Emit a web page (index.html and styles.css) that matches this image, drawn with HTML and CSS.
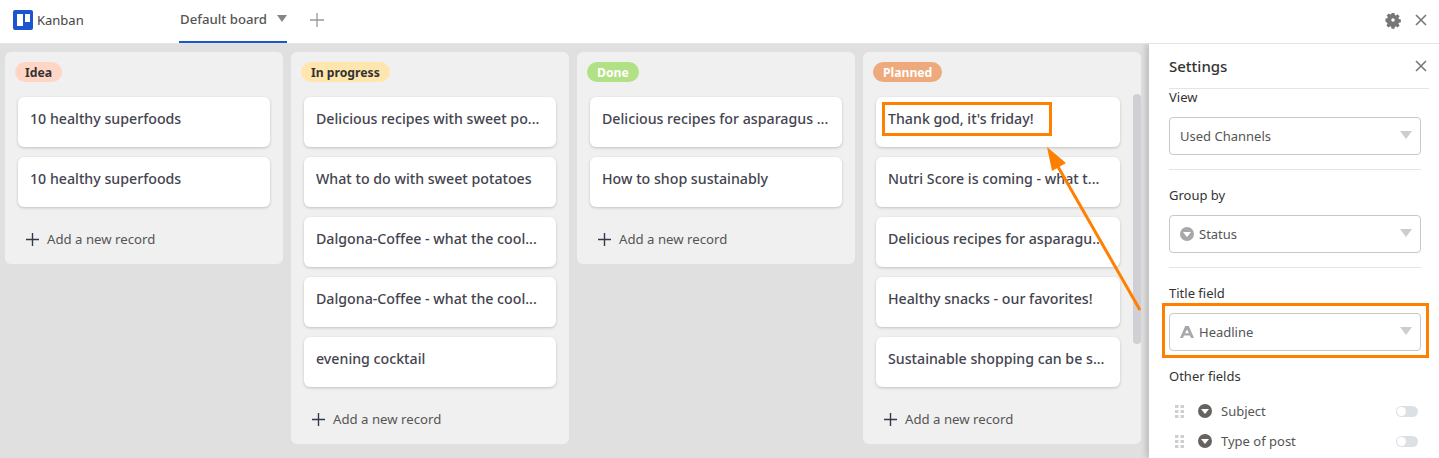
FILE: index.html
```html
<!DOCTYPE html>
<html lang="en">

<head>
    <meta charset="UTF-8">
    <title>Kanban</title>
    <link rel="stylesheet" href="styles.css">
</head>

<body>
    <!-- Top bar -->
    <header class="topbar">
        <div class="brand">
            <svg class="brand-logo" viewBox="0 0 20 20">
                <rect width="20" height="20" rx="2" fill="#1b56cc" />
                <rect x="4" y="4" width="6" height="12" fill="#fff" />
                <rect x="12" y="4" width="5" height="8" fill="#fff" />
            </svg>
            <span>Kanban</span>
        </div>
        <div class="tab">
            <span>Default board</span>
            <svg class="tab-caret" viewBox="0 0 10 7"><path d="M0 0h10L5 7z" /></svg>
        </div>
        <svg class="add-tab" viewBox="0 0 14 14"><path d="M7 0v14M0 7h14" /></svg>
        <div class="top-actions">
            <svg class="gear" viewBox="0 0 24 24">
                <path fill-rule="evenodd" d="M9.500 0h5l.7 3.400 1.700.7 2.900-1.900 3.500 3.500-1.900 2.900.7 1.700 3.400.7v5l-3.400.7-.7 1.700 1.900 2.900-3.500 3.500-2.900-1.900-1.700.7-.7 3.400h-5l-.7-3.400-1.700-.7-2.900 1.900-3.500-3.500 1.900-2.900-.7-1.700L-1 14.500v-5l3.400-.7.7-1.700-1.900-2.900 3.500-3.500 2.900 1.900 1.700-.7zM12 9a3 3 0 1 0 0 6 3 3 0 0 0 0-6z" />
            </svg>
            <svg class="close" viewBox="0 0 12 12"><path d="M1 1l10 10M11 1L1 11" /></svg>
        </div>
    </header>

    <div class="main">
        <!-- Board -->
        <div class="board">
            <section class="column">
                <span class="badge badge-idea">Idea</span>
                <div class="card">10 healthy superfoods</div>
                <div class="card">10 healthy superfoods</div>
                <div class="add-record"><svg viewBox="0 0 14 14"><path d="M7 0v14M0 7h14" /></svg>Add a new record</div>
            </section>
            <section class="column">
                <span class="badge badge-progress">In progress</span>
                <div class="card">Delicious recipes with sweet po...</div>
                <div class="card">What to do with sweet potatoes</div>
                <div class="card">Dalgona-Coffee - what the cool...</div>
                <div class="card">Dalgona-Coffee - what the cool...</div>
                <div class="card">evening cocktail</div>
                <div class="add-record"><svg viewBox="0 0 14 14"><path d="M7 0v14M0 7h14" /></svg>Add a new record</div>
            </section>
            <section class="column">
                <span class="badge badge-done">Done</span>
                <div class="card">Delicious recipes for asparagus ...</div>
                <div class="card">How to shop sustainably</div>
                <div class="add-record"><svg viewBox="0 0 14 14"><path d="M7 0v14M0 7h14" /></svg>Add a new record</div>
            </section>
            <section class="column column-scroll">
                <span class="badge badge-planned">Planned</span>
                <div class="card">Thank god, it's friday!</div>
                <div class="card">Nutri Score is coming - what t...</div>
                <div class="card">Delicious recipes for asparagu...</div>
                <div class="card">Healthy snacks - our favorites!</div>
                <div class="card">Sustainable shopping can be s...</div>
                <div class="add-record"><svg viewBox="0 0 14 14"><path d="M7 0v14M0 7h14" /></svg>Add a new record</div>
                <div class="scroll-thumb"></div>
            </section>
        </div>

        <!-- Settings panel -->
        <aside class="settings">
            <div class="settings-head">
                <span>Settings</span>
                <svg class="close" viewBox="0 0 12 12"><path d="M1 1l10 10M11 1L1 11" /></svg>
            </div>
            <div class="field field-first">
                <label>View</label>
                <div class="select">
                    <span>Used Channels</span>
                    <svg class="select-caret" viewBox="0 0 12 8"><path d="M0 0h12L6 8z" /></svg>
                </div>
            </div>
            <div class="field">
                <label>Group by</label>
                <div class="select">
                    <svg class="option-icon" viewBox="0 0 14 14"><circle cx="7" cy="7" r="7" fill="#a8a8a8" /><path d="M3 5h8L7 10z" fill="#fff" /></svg>
                    <span>Status</span>
                    <svg class="select-caret" viewBox="0 0 12 8"><path d="M0 0h12L6 8z" /></svg>
                </div>
            </div>
            <div class="field field-last">
                <label>Title field</label>
                <div class="select">
                    <svg class="option-icon" viewBox="0 0 14 14"><path d="M5.200 1h3.600L14 13h-3l-1-2.600H4L3 13H0zM7 4.400 5 8.200h4z" fill="#a8a8a8" fill-rule="evenodd" /></svg>
                    <span>Headline</span>
                    <svg class="select-caret" viewBox="0 0 12 8"><path d="M0 0h12L6 8z" /></svg>
                </div>
            </div>
            <div class="other-title">Other fields</div>
            <div class="other-row">
                <svg class="drag" viewBox="0 0 9 13"><path d="M0 0h3.500v3H0zM5.500 0H9v3H5.500zM0 5h3.500v3H0zM5.500 5H9v3H5.500zM0 10h3.500v3H0zM5.500 10H9v3H5.500z" /></svg>
                <svg class="other-icon" viewBox="0 0 14 14"><circle cx="7" cy="7" r="7" fill="#66625f" /><path d="M3 5h8L7 10z" fill="#fff" /></svg>
                <span>Subject</span>
                <span class="toggle"></span>
            </div>
            <div class="other-row">
                <svg class="drag" viewBox="0 0 9 13"><path d="M0 0h3.500v3H0zM5.500 0H9v3H5.500zM0 5h3.500v3H0zM5.500 5H9v3H5.500zM0 10h3.500v3H0zM5.500 10H9v3H5.500z" /></svg>
                <svg class="other-icon" viewBox="0 0 14 14"><circle cx="7" cy="7" r="7" fill="#66625f" /><path d="M3 5h8L7 10z" fill="#fff" /></svg>
                <span>Type of post</span>
                <span class="toggle"></span>
            </div>
        </aside>
    </div>

    <!-- Annotations drawn on top of the screenshot -->
    <div class="mark mark-card"></div>
    <div class="mark mark-field"></div>
    <svg class="arrow" viewBox="0 0 1439 458">
        <path d="M1140 310 1057 165" />
        <path class="arrow-head" d="M1047 147 1066 163 1052 171z" />
    </svg>
</body>

</html>
```

FILE: styles.css
```css
* {
    box-sizing: border-box;
}

body {
    margin: 0;
    height: 458px;
    overflow: hidden;
    position: relative;
    font-family: "Noto Sans", "Open Sans", sans-serif;
    color: #333;
    background: #fff;
    display: flex;
    flex-direction: column;
}

/* Top bar */
.topbar {
    height: 44px;
    flex: none;
    display: flex;
    align-items: flex-start;
    background: #fff;
    border-bottom: 1px solid #e4e4e4;
    padding-left: 13px;
}

.brand {
    width: 166px;
    height: 40px;
    display: flex;
    align-items: center;
    gap: 4px;
    font-size: 13px;
    color: #444;
}

.brand-logo {
    width: 20px;
    height: 20px;
}

.tab {
    width: 108px;
    height: 43px;
    padding: 0 0 3px 1px;
    display: flex;
    align-items: center;
    justify-content: space-between;
    border-bottom: 2px solid #1b56cc;
    font-size: 13.2px;
    font-weight: 500;
    color: #555;
}

.tab-caret {
    width: 10px;
    height: 7px;
    margin-top: -2px;
    fill: #8a8487;
}

.add-tab {
    width: 14px;
    height: 14px;
    margin: 13px 0 0 23px;
    fill: none;
    stroke: #999;
    stroke-width: 1.3;
}

.top-actions {
    margin-left: auto;
    padding: 13px 12px 0 0;
    display: flex;
    align-items: center;
    gap: 15px;
}

.gear {
    width: 14px;
    height: 14px;
    overflow: visible;
    fill: #777;
}

.close {
    width: 12px;
    height: 12px;
    fill: none;
    stroke: #777;
    stroke-width: 1.6;
}

.main {
    flex: 1;
    display: flex;
    min-height: 0;
}

/* Board */
.board {
    flex: 1;
    display: flex;
    align-items: flex-start;
    gap: 8px;
    padding: 8px 0 0 5px;
    background: #e0e0e0;
}

.column {
    position: relative;
    width: 278px;
    padding: 10px 13px 0;
    background: #f0f0f0;
    border-radius: 6px;
}

.badge {
    display: inline-block;
    height: 20px;
    margin-left: -3px;
    margin-bottom: 15px;
    padding: 0 10px;
    border-radius: 10px;
    font-size: 12.2px;
    font-weight: 700;
    line-height: 21px;
    vertical-align: top;
}

.badge-idea {
    background: #ffd5c5;
}

.badge-progress {
    background: #ffe5ae;
}

.badge-done {
    background: #b2e085;
    color: #fff;
}

.badge-planned {
    background: #eeaa7c;
    color: #fff;
}

.card {
    width: 252px;
    height: 50px;
    margin-bottom: 10px;
    padding: 12px 12px 0;
    background: #fff;
    border-radius: 6px;
    box-shadow: 0 1px 3px rgba(0, 0, 0, 0.2);
    font-size: 14.2px;
    font-weight: 500;
    color: #44444f;
    white-space: nowrap;
}

.column-scroll .card {
    width: 244px;
}

.add-record {
    height: 47px;
    margin-top: 2px;
    padding: 0 0 3px 8px;
    display: flex;
    align-items: center;
    gap: 8px;
    font-size: 13.2px;
    color: #555;
}

.add-record svg {
    width: 13px;
    height: 13px;
    fill: none;
    stroke: #33384a;
    stroke-width: 1.5;
}

.scroll-thumb {
    position: absolute;
    top: 42px;
    right: 0;
    width: 8px;
    height: 250px;
    border-radius: 4px;
    background: #cfcfd4;
}

/* Settings panel */
.settings {
    width: 290px;
    flex: none;
    padding: 0 10px 0 20px;
    background: #fff;
    box-shadow: -3px 0 6px rgba(0, 0, 0, 0.16);
    clip-path: inset(0 0 0 -10px);
    z-index: 1;
    font-size: 13px;
}

.settings-head {
    height: 45px;
    padding: 0 2px 0 0;
    display: flex;
    align-items: center;
    justify-content: space-between;
    border-bottom: 1px solid #e4e4e4;
    font-size: 15px;
    font-weight: 500;
}

.field {
    width: 252px;
    padding: 15px 0 14px;
    border-bottom: 1px solid #e4e4e4;
}

.field label {
    display: block;
    height: 20px;
    margin-bottom: 10px;
    line-height: 20px;
}

.field-first {
    padding-top: 0;
}

.field-first label {
    height: 18px;
    line-height: 16px;
}

.field-last {
    border-bottom: none;
    padding-bottom: 0;
}

.select {
    height: 38px;
    padding: 0 8px 0 10px;
    display: flex;
    align-items: center;
    gap: 5px;
    border: 1px solid #c8c8c8;
    border-radius: 4px;
    color: #555;
}

.select-caret {
    width: 12px;
    height: 8px;
    margin-left: auto;
    margin-top: -3px;
    fill: #cdcdcd;
}

.option-icon {
    width: 14px;
    height: 14px;
}

.other-title {
    margin-top: 15px;
    height: 20px;
    line-height: 20px;
}

.other-row {
    width: 250px;
    height: 30px;
    display: flex;
    align-items: center;
    color: #555;
}

.other-title + .other-row {
    margin-top: 10px;
}

.drag {
    width: 9px;
    height: 13px;
    margin: 0 14px 0 6px;
    fill: #cfcfcf;
}

.other-icon {
    width: 14px;
    height: 14px;
    margin-right: 9px;
}

.toggle {
    position: relative;
    width: 22px;
    height: 11px;
    margin-left: auto;
    margin-right: 1px;
    border-radius: 6px;
    background: #dcdfe4;
}

.toggle::before {
    content: "";
    position: absolute;
    left: 1px;
    top: 1px;
    width: 9px;
    height: 9px;
    border-radius: 50%;
    background: #fff;
}

/* Annotations */
.mark {
    position: absolute;
    border: 3px solid #ff8000;
    z-index: 2;
}

.mark-card {
    left: 882px;
    top: 102px;
    width: 170px;
    height: 34px;
}

.mark-field {
    left: 1162px;
    top: 303px;
    width: 267px;
    height: 55px;
}

.arrow {
    position: absolute;
    left: 0;
    top: 0;
    width: 1439px;
    height: 458px;
    z-index: 2;
    fill: none;
    stroke: #ff8000;
    stroke-width: 3;
}

.arrow-head {
    fill: #ff8000;
    stroke: none;
}
```
